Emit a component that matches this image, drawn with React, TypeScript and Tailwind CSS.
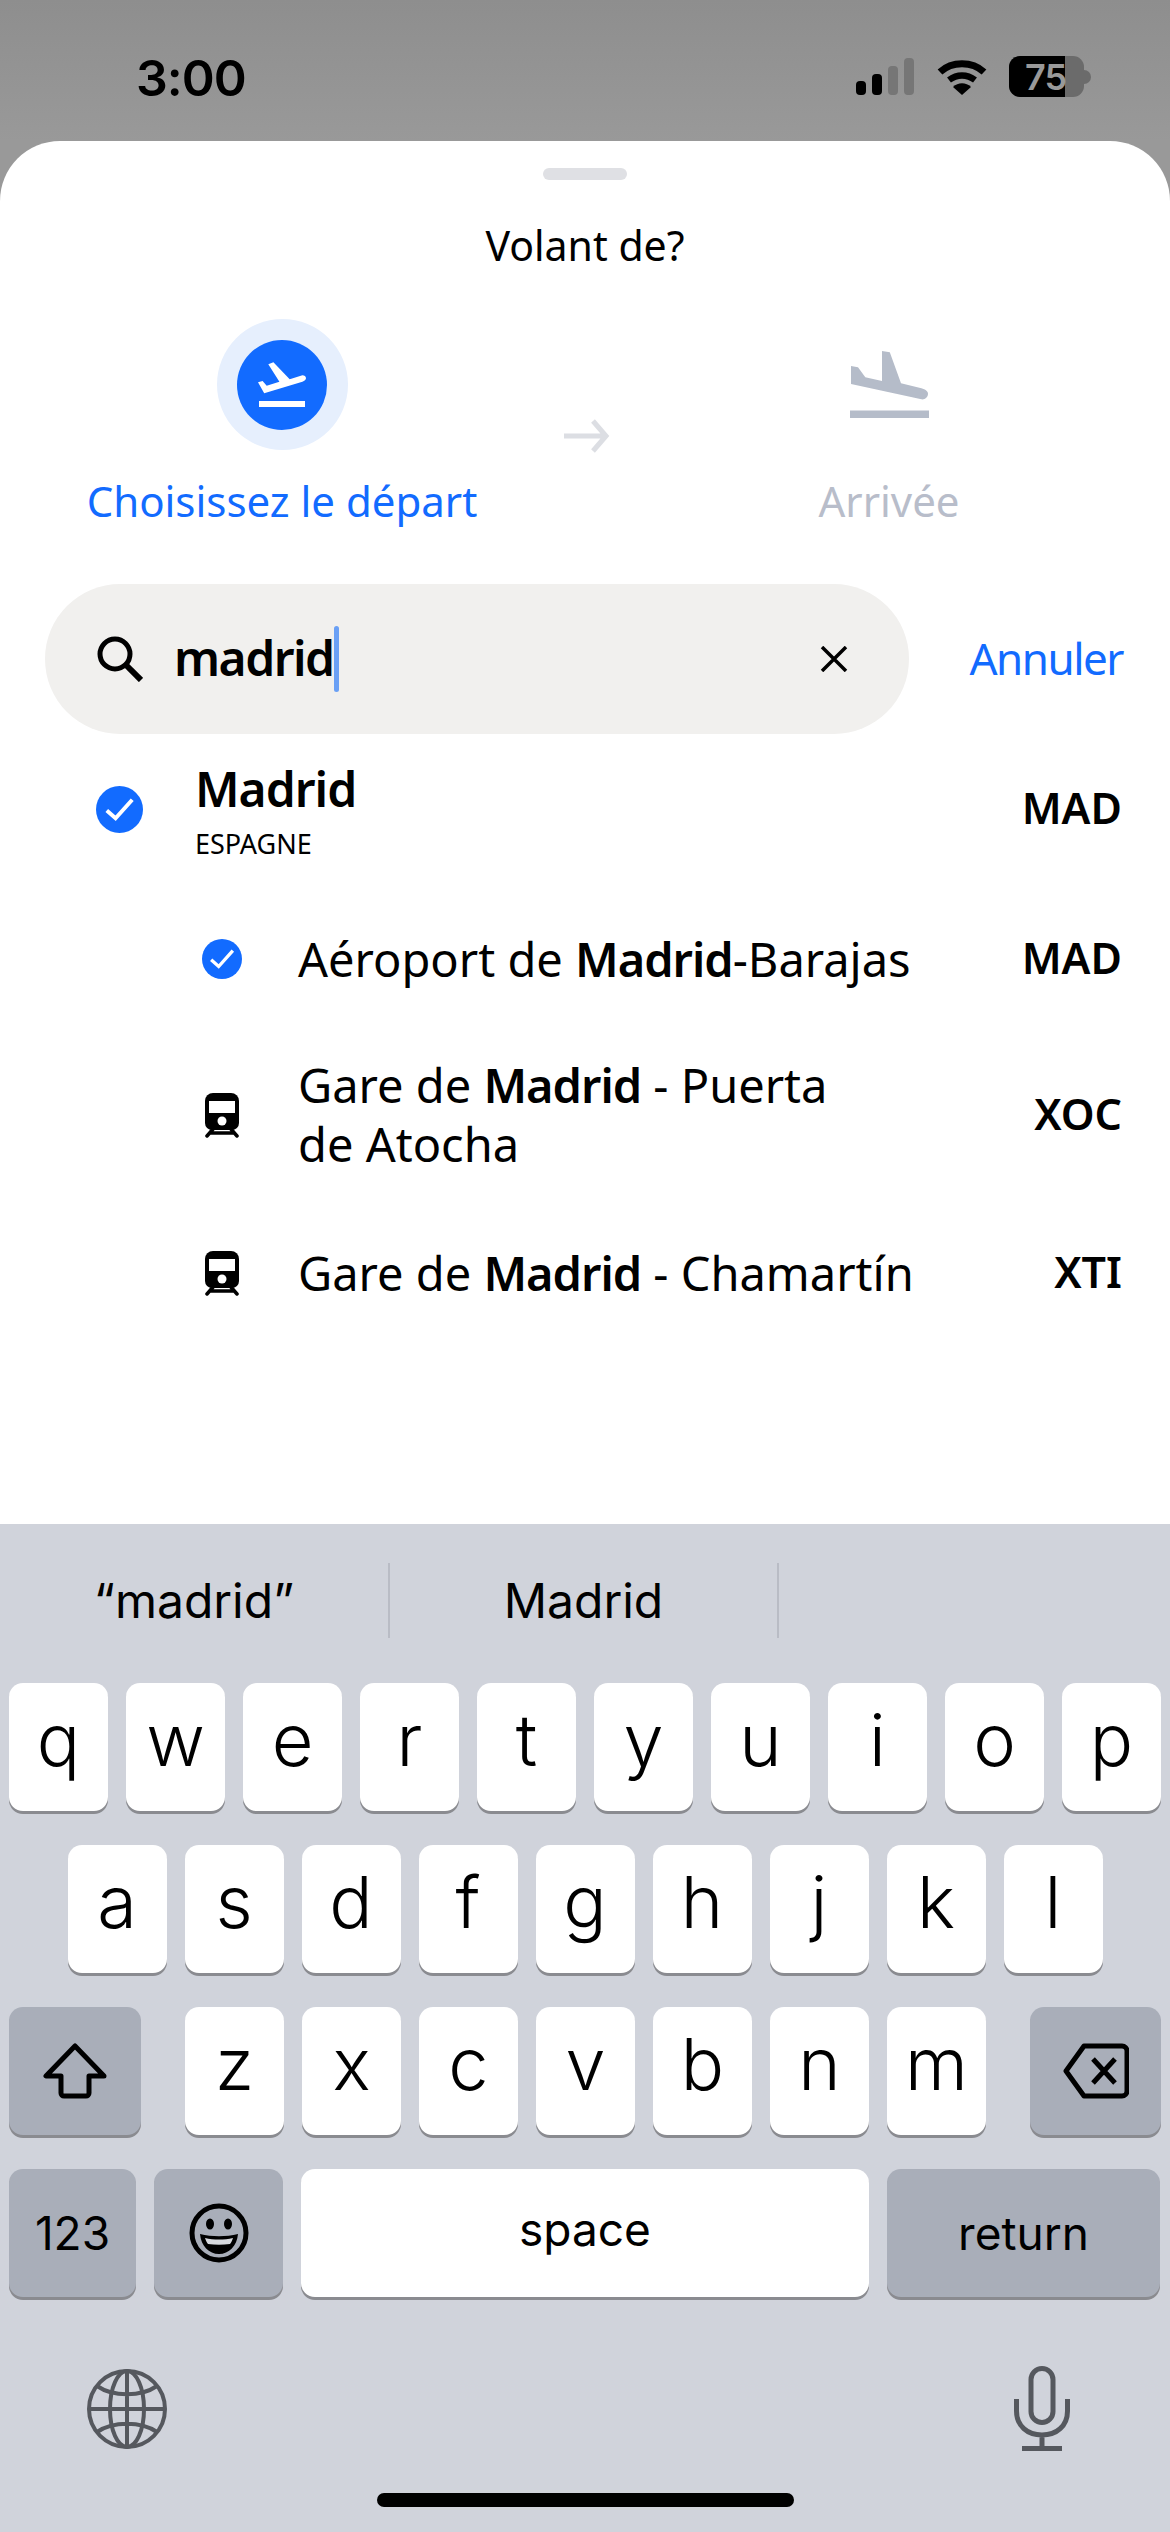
import React from 'react';

const bodyFont = 'font-["Noto_Sans","Open_Sans",sans-serif]';
const keyFont = 'font-["Inter",sans-serif]';
const codeClass = 'ml-auto pb-[2px] text-[43px] leading-[56px] font-semibold text-black';

const CheckBadge: React.FC<{ className: string }> = ({ className }) => (
    <svg viewBox="0 0 48 48" className={className}>
        <circle cx="24" cy="24" r="24" fill="#126BFF" />
        <path d="M11 25l9 8 17-19" fill="none" stroke="#fff" strokeWidth="4" />
    </svg>
);

const TrainIcon = () => (
    <svg viewBox="0 0 34 45" className="w-[34px] h-[45px] shrink-0">
        <path d="M8 0h18a8 8 0 0 1 8 8v22a7 7 0 0 1-7 7H7a7 7 0 0 1-7-7V8a8 8 0 0 1 8-8z" fill="#000" />
        <rect x="4" y="8" width="26" height="12" fill="#fff" />
        <circle cx="17" cy="28" r="4.5" fill="#fff" />
        <path d="M9 35L2 43M25 35l7 8M6 40h22" fill="none" stroke="#000" strokeWidth="3.5" strokeLinecap="round" />
    </svg>
);

const Key: React.FC<{ label?: string; className?: string; children?: React.ReactNode }> = ({ label, className = 'w-[99px] bg-white', children }) => (
    <div className={`h-[128px] rounded-[14px] shadow-[0_3px_0_#8a8b90] flex items-center justify-center text-black ${className}`}>
        {label ? <span className="text-[72px] font-light leading-none pb-[14px]">{label}</span> : children}
    </div>
);

const rowOne = ['q', 'w', 'e', 'r', 't', 'y', 'u', 'i', 'o', 'p'];
const rowTwo = ['a', 's', 'd', 'f', 'g', 'h', 'j', 'k', 'l'];
const rowThree = ['z', 'x', 'c', 'v', 'b', 'n', 'm'];

export default function App() {
    return (
        <div className={`w-[1170px] h-[2532px] flex flex-col overflow-hidden bg-[#999999] ${bodyFont}`}>
            {/* status bar */}
            <div className="h-[141px] shrink-0 bg-linear-to-b from-[#8e8e8e] to-[#999999] flex items-start justify-between pl-[136px] pr-[79px] pt-[49px]">
                <span className='font-["Inter",sans-serif] font-semibold text-[50px] tracking-[-1px] leading-[58px] text-black'>3:00</span>
                <div className="flex items-center pt-[7px]">
                    <svg viewBox="0 0 58 37" className="w-[58px] h-[37px]">
                        <rect x="0" y="23" width="10" height="14" rx="4" fill="#000" />
                        <rect x="16" y="16" width="10" height="21" rx="4" fill="#000" />
                        <rect x="32" y="8" width="10" height="29" rx="4" fill="#767676" />
                        <rect x="48" y="0" width="10" height="37" rx="4" fill="#767676" />
                    </svg>
                    <svg viewBox="0 0 50 37" className="w-[50px] h-[37px] ml-[23px]">
                        <path d="M3 14C15 3 35 3 47 14" fill="none" stroke="#000" strokeWidth="7" />
                        <path d="M12 22c8-6 18-6 26 0" fill="none" stroke="#000" strokeWidth="6.5" />
                        <path d="M16 29c5-5 13-5 18 0l-9 8z" fill="#000" />
                    </svg>
                    <div className="relative w-[75px] h-[41px] ml-[22px] rounded-[11px] bg-[#6b6b6b]">
                        <div className="h-full w-[56px] rounded-l-[11px] bg-black" />
                        <span className='absolute inset-0 flex items-center justify-center pr-[2px] font-["Inter",sans-serif] font-semibold text-[36px] tracking-[-1px] leading-none text-[#999999]'>75</span>
                    </div>
                    <div className="w-[7px] h-[14px] rounded-r-full bg-[#6b6b6b]" />
                </div>
            </div>

            {/* sheet */}
            <div className="h-[1383px] shrink-0 bg-white rounded-t-[60px] flex flex-col">
                <div className="w-[84px] h-[12px] mt-[27px] mx-auto rounded-full bg-[#dfe0e4]" />
                <div className="mt-[37px] text-center text-[41px] leading-[56px] text-black">Volant de?</div>

                <div className="flex mt-[46px]">
                    <div className="w-[564px] flex flex-col items-center">
                        <div className="w-[131px] h-[131px] rounded-full bg-[#e6effd] flex items-center justify-center">
                            <div className="w-[90px] h-[90px] rounded-full bg-[#126bff] flex items-center justify-center">
                                <svg viewBox="0 0 48 45" className="w-[48px] h-[45px]">
                                    <path d="M10.3 2.3L15.4.3l16.3 17 12.7-4c2 0 3.6 1.3 3.6 3 0 1.500-1.500 2.800-3.600 3.400L6.200 31.300 0 20.300l4.600-1.300 4.100 4.700 12.700-4z" fill="#fff" />
                                    <rect x="1" y="39" width="46" height="6" fill="#fff" />
                                </svg>
                            </div>
                        </div>
                        <span className="mt-[23px] text-[42px] leading-[56px] text-[#126bff]">Choisissez le départ</span>
                    </div>
                    <div className="w-[44px] pt-[100px]">
                        <svg viewBox="0 0 46 34" className="w-[46px] h-[34px]">
                            <path d="M0 17h42M29 2l13 15-13 15" fill="none" stroke="#dcdee3" strokeWidth="5" />
                        </svg>
                    </div>
                    <div className="flex-1 flex flex-col items-center">
                        <div className="h-[131px] flex items-center">
                            <svg viewBox="0 0 79 67" className="w-[79px] h-[67px]">
                                <path d="M32 0l7.800 1.300L51 32.300l20.400 5c4 1 6.600 3 6.600 5.500 0 3.500-3.500 6.200-6.600 5.500L1 33V15l7 1.300 7.300 10L32 30z" fill="#b5bcc9" />
                                <rect x="0" y="59.500" width="79" height="7.500" fill="#b5bcc9" />
                            </svg>
                        </div>
                        <span className="mt-[23px] text-[42px] leading-[56px] text-[#b8bdca]">Arrivée</span>
                    </div>
                </div>

                {/* search */}
                <div className="flex items-center mt-[55px] pl-[45px] pr-[47px]">
                    <div className="w-[864px] h-[150px] rounded-full bg-[#f1f0ee] flex items-center pl-[52px] pr-[61px]">
                        <svg viewBox="0 0 46 46" className="w-[46px] h-[46px] shrink-0">
                            <circle cx="18" cy="18" r="15" fill="none" stroke="#000" strokeWidth="5" />
                            <path d="M29 29l15 15" stroke="#000" strokeWidth="6" />
                        </svg>
                        <span className="ml-[31px] pb-[2px] text-[48px] tracking-[-1.5px] leading-[64px] font-semibold text-black">madrid</span>
                        <div className="w-[5px] h-[66px] rounded-full bg-[#6aa0f5]" />
                        <svg viewBox="0 0 28 26" className="w-[28px] h-[26px] ml-auto">
                            <path d="M2 1l24 24M26 1L2 25" fill="none" stroke="#000" strokeWidth="3.500" />
                        </svg>
                    </div>
                    <span className="ml-auto pb-[2px] text-[44px] tracking-[-1.5px] leading-[60px] text-[#126bff]">Annuler</span>
                </div>

                {/* results */}
                <div className="flex items-center h-[150px] pl-[96px] pr-[48px]">
                    <CheckBadge className="w-[47px] h-[47px] shrink-0" />
                    <div className="ml-[52px] flex flex-col">
                        <span className="mt-[2px] text-[48px] tracking-[-1px] leading-[60px] font-semibold text-black">Madrid</span>
                        <span className="mt-[7px] text-[27px] leading-[36px] text-black">ESPAGNE</span>
                    </div>
                    <span className={codeClass}>MAD</span>
                </div>
                <div className="flex items-center h-[150px] pl-[202px] pr-[48px]">
                    <CheckBadge className="w-[40px] h-[40px] shrink-0" />
                    <span className="ml-[56px] text-[47px] leading-[59px] text-black">Aéroport de <b className="font-semibold tracking-[-1px]">Madrid</b>-Barajas</span>
                    <span className={codeClass}>MAD</span>
                </div>
                <div className="flex items-center h-[162px] pl-[205px] pr-[48px]">
                    <TrainIcon />
                    <span className="ml-[59px] w-[560px] text-[47px] leading-[59px] text-black">Gare de <b className="font-semibold tracking-[-1px]">Madrid</b> - Puerta de Atocha</span>
                    <span className={codeClass}>XOC</span>
                </div>
                <div className="flex items-center h-[154px] pl-[205px] pr-[48px]">
                    <TrainIcon />
                    <span className="ml-[59px] text-[47px] leading-[59px] text-black">Gare de <b className="font-semibold tracking-[-1px]">Madrid</b> - Chamartín</span>
                    <span className={codeClass}>XTI</span>
                </div>
            </div>

            {/* keyboard */}
            <div className={`flex-1 bg-[#d0d3db] flex flex-col pt-[39px] ${keyFont}`}>
                <div className="flex h-[75px] text-[48px] leading-[75px] text-black">
                    <div className="w-[390px] text-center border-r-2 border-[#b9bcc5]">“madrid”</div>
                    <div className="w-[389px] text-center border-r-2 border-[#b9bcc5]">Madrid</div>
                </div>
                <div className="flex flex-col gap-[34px] mt-[45px] px-[9px]">
                    <div className="flex gap-[18px]">
                        {rowOne.map(k => <Key key={k} label={k} />)}
                    </div>
                    <div className="flex gap-[18px] justify-center">
                        {rowTwo.map(k => <Key key={k} label={k} />)}
                    </div>
                    <div className="flex justify-between">
                        <Key className="w-[132px] bg-[#a9aeb9]">
                            <svg viewBox="0 0 64 56" className="w-[64px] h-[56px]">
                                <path d="M32 3L3 33h15v17a3 3 0 0 0 3 3h22a3 3 0 0 0 3-3V33h15z" fill="none" stroke="#000" strokeWidth="5" strokeLinejoin="round" />
                            </svg>
                        </Key>
                        <div className="flex gap-[18px]">
                            {rowThree.map(k => <Key key={k} label={k} />)}
                        </div>
                        <Key className="w-[131px] bg-[#a9aeb9]">
                            <svg viewBox="0 0 66 56" className="w-[66px] h-[56px]">
                                <path d="M21 3h38a5 5 0 0 1 5 5v40a5 5 0 0 1-5 5H21L3 28z" fill="none" stroke="#000" strokeWidth="5" strokeLinejoin="round" />
                                <path d="M30 16l22 24M52 16L30 40" fill="none" stroke="#000" strokeWidth="5" />
                            </svg>
                        </Key>
                    </div>
                    <div className="flex gap-[18px]">
                        <Key className="w-[127px] bg-[#a9aeb9]">
                            <span className="text-[46px] leading-none">123</span>
                        </Key>
                        <Key className="w-[129px] bg-[#a9aeb9]">
                            <svg viewBox="0 0 60 60" className="w-[60px] h-[60px]">
                                <circle cx="30" cy="30" r="27" fill="none" stroke="#000" strokeWidth="5" />
                                <ellipse cx="21" cy="21" rx="4" ry="5.500" fill="#000" />
                                <ellipse cx="39" cy="21" rx="4" ry="5.500" fill="#000" />
                                <path d="M11 31c12 3 26 3 38 0-1 12-9 20-19 20s-18-8-19-20z" fill="#000" />
                                <path d="M16 35c9 2 19 2 28 0-1 3-2 5-3 6-7 1-15 1-22 0-1-1-2-3-3-6z" fill="#d7d9de" />
                            </svg>
                        </Key>
                        <Key className="w-[568px] bg-white">
                            <span className="text-[46px] leading-none pb-[8px]">space</span>
                        </Key>
                        <Key className="w-[273px] bg-[#a9aeb9]">
                            <span className="text-[46px] leading-none">return</span>
                        </Key>
                    </div>
                </div>
                <div className="flex items-center justify-between h-[85px] mt-[69px] pl-[87px] pr-[100px]">
                    <svg viewBox="0 0 80 80" className="w-[80px] h-[80px]">
                        <g fill="none" stroke="#55585e" strokeWidth="4">
                            <circle cx="40" cy="40" r="38" />
                            <ellipse cx="40" cy="40" rx="17" ry="38" />
                            <path d="M40 2v76M2 40h76M10 17c16 11 44 11 60 0M10 63c16-11 44-11 60 0" />
                        </g>
                    </svg>
                    <svg viewBox="0 0 56 85" className="w-[56px] h-[85px]">
                        <g fill="none" stroke="#55585e" strokeWidth="5">
                            <rect x="17" y="2.500" width="22" height="54" rx="11" />
                            <path d="M2.500 33v12c0 15 11 24 25.500 24s25.500-9 25.500-24V33M28 69v12" />
                        </g>
                        <path d="M8 80h40v5H8z" fill="#55585e" />
                    </svg>
                </div>
                <div className="w-[417px] h-[14px] mt-[42px] mx-auto rounded-full bg-black" />
            </div>
        </div>
    );
}
